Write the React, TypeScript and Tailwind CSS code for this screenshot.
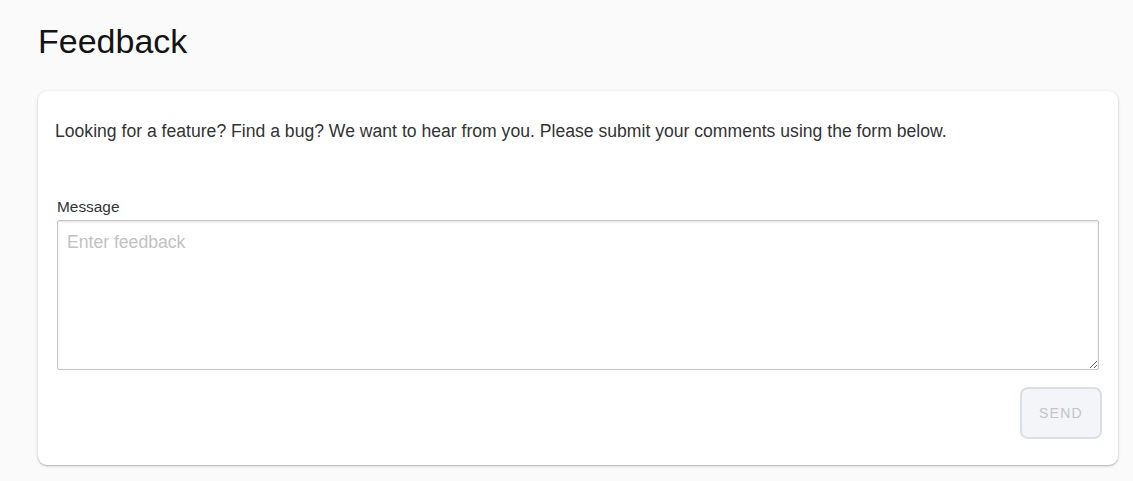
import React from 'react';

export default function App() {
  return (
    <div className="min-h-[481px] bg-[#fafafa] pl-[38px] pr-[15px] pt-[20px] pb-[15px] font-['Liberation_Sans',Arial,sans-serif]">
      <h1 className="text-[34px] leading-[42px] text-[#141414] font-normal">Feedback</h1>
      <div className="mt-[29px] rounded-[9px] bg-white px-[17px] pt-[28px] pb-[26px] shadow-[0_1px_3px_rgba(0,0,0,0.22),0_1px_1px_rgba(0,0,0,0.1)]">
        <p className="text-[17.6px] leading-[24px] text-[#333]">
          Looking for a feature? Find a bug? We want to hear from you. Please submit your comments using the form below.
        </p>
        <form className="mt-[55px] px-[2px]" onSubmit={(e) => e.preventDefault()}>
          <label className="block text-[15.4px] leading-[18px] text-[#333]">Message</label>
          <textarea
            placeholder="Enter feedback"
            className="mt-[4px] block h-[150px] w-full resize-y rounded-[2px] border border-[#c6c6c6] bg-white px-[9px] py-[10px] text-[17.6px] leading-[22px] text-[#333] shadow-[inset_0_1px_2px_rgba(0,0,0,0.12)] outline-none placeholder:text-[#c2c2c2]"
          />
          <div className="mt-[17px] -mr-[3px] flex justify-end">
            <button
              type="button"
              disabled
              className="h-[52px] w-[82px] rounded-[8px] border-2 border-[#dcdee5] bg-[#f4f5f8] text-[14px] tracking-[1.3px] text-[#c2c4ca]"
            >
              SEND
            </button>
          </div>
        </form>
      </div>
    </div>
  );
}
